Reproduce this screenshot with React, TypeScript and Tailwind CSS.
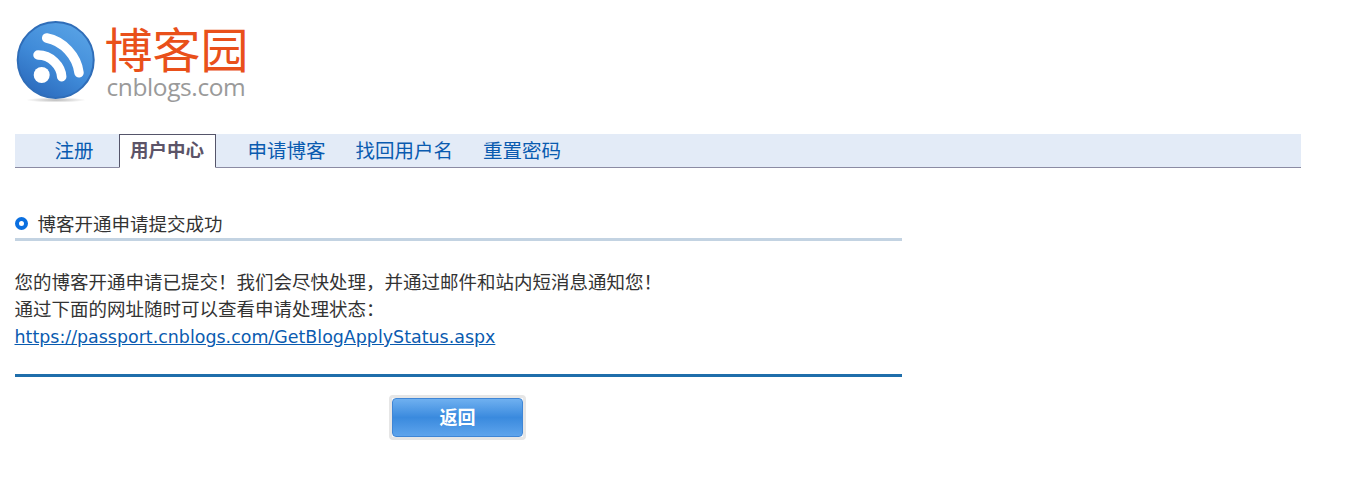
const FONT = "font-['DejaVu_Sans','Noto_Sans_CJK_SC',sans-serif]";

const NOTICE = '您的博客开通申请已提交\uFF01我们会尽快处理\uFF0C并通过邮件和站内短消息通知您\uFF01';
const STATUS_HINT = '通过下面的网址随时可以查看申请处理状态\uFF1A';

function Logo() {
  return (
    <div className="flex h-[134px] items-start pt-[20px]">
      <svg width="82" height="84" viewBox="0 0 82 84" className="shrink-0">
        <defs>
          <linearGradient id="disc" x1="0.8" y1="0" x2="0.2" y2="1">
            <stop offset="0" stopColor="#5aa4e6" />
            <stop offset="0.55" stopColor="#3f8ad8" />
            <stop offset="1" stopColor="#2a68ba" />
          </linearGradient>
          <radialGradient id="shade" cx="0.5" cy="0.5" r="0.5">
            <stop offset="0" stopColor="#8a8a8a" stopOpacity="0.6" />
            <stop offset="1" stopColor="#8a8a8a" stopOpacity="0" />
          </radialGradient>
        </defs>
        <ellipse cx="41" cy="80" rx="30" ry="2.5" fill="url(#shade)" />
        <circle cx="40.7" cy="40" r="38" fill="url(#disc)" stroke="#2f6db8" strokeWidth="2" />
        <circle cx="26.7" cy="55" r="8" fill="#ffffff" />
        <path d="M23 35 C36 35 46 46 46.7 56.7" fill="none" stroke="#ffffff" strokeWidth="9.5" strokeLinecap="round" />
        <path d="M31.7 18 C48 21 62 36 64 52.7" fill="none" stroke="#ffffff" strokeWidth="9.5" strokeLinecap="round" />
      </svg>
      <div className="ml-[8px] flex flex-col items-start">
        <div className="mt-[1px] h-[52px] font-['Noto_Sans_CJK_SC',sans-serif] text-[48px] leading-[52px] text-[#e9501a]">
          博客园
        </div>
        <div className="ml-[2px] font-['Open_Sans',sans-serif] text-[24.5px] leading-[28px] tracking-[-0.4px] text-[#9a9a9a]">
          cnblogs.com
        </div>
      </div>
    </div>
  );
}

function Nav() {
  const link = "mb-[1px] text-[19.5px] leading-[28px] text-[#0a5bb0]";
  return (
    <div className="flex h-[34px] w-[1286px] items-end border-b border-b-[#8b8ba3] bg-[#e3ebf7] pl-[40px]">
      <span className={link}>注册</span>
      <span className="mb-[-1px] ml-[25px] flex h-[34px] w-[97px] items-center justify-center border border-[#55556a] border-b-white bg-white text-[18.5px] font-bold text-[#5c5468]">
        用户中心
      </span>
      <span className={`${link} ml-[32px]`}>申请博客</span>
      <span className={`${link} ml-[30px]`}>找回用户名</span>
      <span className={`${link} ml-[30px]`}>重置密码</span>
    </div>
  );
}

export default function App() {
  return (
    <div className={`${FONT} h-[479px] overflow-hidden bg-white pl-[14.5px] text-[18.5px] text-[#333333]`}>
      <Logo />
      <Nav />
      <div className="w-[887px]">
        <div className="mt-[43px] flex h-[30px] items-center border-b-[3px] border-b-[#c3d3e2] pb-[2px]">
          <span className="h-[13px] w-[13px] rounded-full border-[4px] border-[#0a6fe0] bg-white" />
          <span className="mt-[3px] ml-[10px] leading-[26px]">博客开通申请提交成功</span>
        </div>
        <div className="mt-[28px] leading-[27px]">
          <p>{NOTICE}</p>
          <p>{STATUS_HINT}</p>
          <a href="#" className="text-[17.45px] text-[#0a5bb0] underline">
            https://passport.cnblogs.com/GetBlogApplyStatus.aspx
          </a>
        </div>
        <div className="mt-[23px] h-[3px] bg-[#1f6eab]" />
        <div className="mt-[18px] flex justify-center">
          <div className="mr-[1px] h-[45px] w-[137px] rounded-[4px] border-[3px] border-[#e6e6e6]">
            <button className="h-full w-full rounded-[4px] border border-[#3f86d6] bg-[linear-gradient(#6fb0f0,#3a8ade_50%,#5ea4ec)] text-[18px] font-bold text-white">
              返回
            </button>
          </div>
        </div>
      </div>
    </div>
  );
}
